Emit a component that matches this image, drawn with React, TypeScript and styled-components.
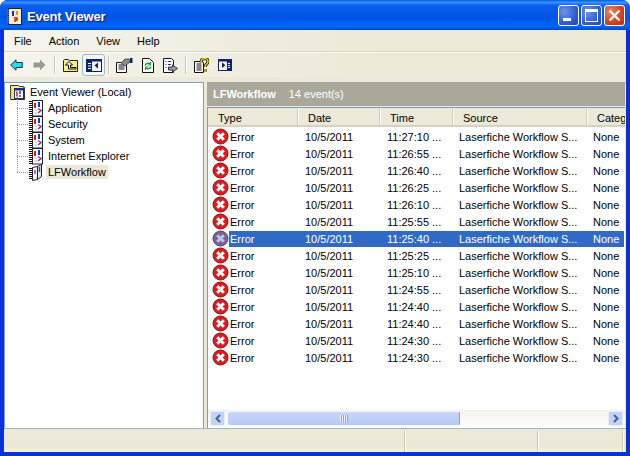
import React from "react";
import styled, { createGlobalStyle } from "styled-components";

const times = [
  "11:27:10 ...", "11:26:55 ...", "11:26:40 ...", "11:26:25 ...", "11:26:10 ...", "11:25:55 ...", "11:25:40 ...",
  "11:25:25 ...", "11:25:10 ...", "11:24:55 ...", "11:24:40 ...", "11:24:40 ...", "11:24:30 ...", "11:24:30 ...",
];
const logs = ["Application", "Security", "System", "Internet Explorer"];

function ErrorIcon({ selected }: { selected?: boolean }) {
  return (
    <IconSvg width="17" height="17" viewBox="0 0 17 17">
      <circle cx="8.5" cy="8.5" r="7.500" fill={selected ? "#7d5f92" : "#dc1c20"} stroke={selected ? "#4f4373" : "#8f1012"} />
      <path d="M5.200 5.200l6.600 6.600M11.800 5.200l-6.600 6.600" stroke={selected ? "#b9c8e8" : "#fff"} strokeWidth="3" />
    </IconSvg>
  );
}

function TitleIcon() {
  return (
    <IconSvg width="16" height="17" viewBox="0 0 16 17">
      <rect x="1.5" y="0.5" width="13" height="16" fill="#f3edc9" stroke="#222" />
      <path d="M1 2v13" stroke="#777" strokeWidth="2" strokeDasharray="1 1" />
      <path d="M6 3v5" stroke="#2030c0" strokeWidth="2" />
      <path d="M10 3v4" stroke="#d0a020" strokeWidth="2" />
      <path d="M7 10h3v2H8v2" fill="none" stroke="#c01818" strokeWidth="1.4" />
    </IconSvg>
  );
}

function FolderIcon() {
  return (
    <IconSvg width="17" height="17" viewBox="0 0 17 17">
      <path d="M1.500 1.500h8l1 1h4v1h1v12h-14z" fill="#f7ef7a" stroke="#333" />
      <path d="M2.500 4v11" stroke="#d8c93c" strokeWidth="2" strokeDasharray="1 1" />
      <rect x="5.500" y="4.500" width="9" height="10" fill="#fff" stroke="#16307e" />
      <rect x="6" y="5" width="8" height="1.500" fill="#16307e" />
      <path d="M8 7.500v5" stroke="#d01818" strokeWidth="1.600" />
      <path d="M11 7v3" stroke="#1840d8" strokeWidth="1.600" />
      <path d="M11 11v2" stroke="#9a30a8" strokeWidth="1.600" />
    </IconSvg>
  );
}

function LogIcon() {
  return (
    <IconSvg width="15" height="17" viewBox="0 0 15 17">
      <path d="M1.500 1v15" stroke="#111" strokeWidth="3" strokeDasharray="1 1" />
      <rect x="3.500" y="0.500" width="10" height="15.500" fill="#fff" stroke="#222" />
      <path d="M6 3v5" stroke="#e01818" strokeWidth="2" />
      <path d="M10 2v5" stroke="#1830e0" strokeWidth="2" />
      <path d="M9 8.500l3 2-3 2.500" fill="none" stroke="#9030a0" strokeWidth="1.500" />
      <path d="M5 10h3M5 13h3" stroke="#bbb" />
    </IconSvg>
  );
}

function OpenLogIcon() {
  return (
    <IconSvg width="15" height="17" viewBox="0 0 15 17">
      <path d="M1.500 4v12" stroke="#111" strokeWidth="3" strokeDasharray="1 1" />
      <path d="M3.500 3.500l5-1v13l-5 1z" fill="#f4f4f4" stroke="#222" />
      <path d="M8.500 2.500l4-2v12l-4 3z" fill="#e8e8e8" stroke="#222" />
      <path d="M6 6v4" stroke="#b040c0" strokeWidth="1.600" />
      <path d="M10.500 3v5" stroke="#2a40c8" strokeWidth="1.400" />
    </IconSvg>
  );
}

function BackIcon() {
  return (
    <IconSvg width="13" height="12" viewBox="0 0 13 12">
      <path d="M0.700 6L6 0.800V3.500h6.300v5H6v2.700z" fill="#25dce8" stroke="#0b3a44" />
    </IconSvg>
  );
}

function ForwardIcon() {
  return (
    <IconSvg width="13" height="12" viewBox="0 0 13 12">
      <path d="M12.500 6L7 0.500V3.500H0.500v5H7v3z" fill="#9a9a92" />
    </IconSvg>
  );
}

function UpIcon() {
  return (
    <IconSvg width="16" height="14" viewBox="0 0 16 14">
      <path d="M0.500 13.500v-11l1-1h4l1 1h8v11z" fill="#f7ef80" stroke="#222" />
      <path d="M6 3.500l3.500 3.500H7.500v2.500H13v1.500H5.500V7H2.500z" fill="#fdfce0" stroke="#111" />
    </IconSvg>
  );
}

function PaneLeftIcon() {
  return (
    <IconSvg width="16" height="13" viewBox="0 0 16 13">
      <rect x="0.500" y="0.500" width="15" height="12" fill="#f4f4f8" stroke="#0a246a" />
      <rect x="1" y="1" width="14" height="1.500" fill="#0a246a" />
      <rect x="1" y="1" width="5" height="11" fill="#0a246a" />
      <path d="M2 4.500h3M2 7h3M2 9.500h3" stroke="#fff" />
      <path d="M12 3.500v6l-3.500-3z" fill="#222" />
    </IconSvg>
  );
}

function PropsIcon() {
  return (
    <IconSvg width="17" height="15" viewBox="0 0 17 15">
      <path d="M0.500 4.500h10v10h-10z" fill="#fff" stroke="#111" />
      <path d="M2.500 7h6M2.500 9h6M2.500 11h6" stroke="#111" />
      <path d="M5 5l4-4h4l1 3-5 4z" fill="#8b8b8b" stroke="#555" />
      <rect x="14" y="0" width="2.500" height="5" fill="#0a246a" />
    </IconSvg>
  );
}

function RefreshIcon() {
  return (
    <IconSvg width="12" height="15" viewBox="0 0 12 15">
      <path d="M0.500 0.500h7l4 4v10h-11z" fill="#fff" stroke="#111" />
      <path d="M3 7.500a3 3 0 0 1 5-1.500M9 8.500a3 3 0 0 1-5 1.500" fill="none" stroke="#1a9a2a" strokeWidth="1.300" />
      <path d="M8.500 4v3h-3M3.500 12V9h3" fill="none" stroke="#1a9a2a" />
    </IconSvg>
  );
}

function ExportIcon() {
  return (
    <IconSvg width="15" height="15" viewBox="0 0 15 15">
      <path d="M0.500 0.500h8l2 2v12h-10z" fill="#fff" stroke="#111" />
      <path d="M2.500 3.500h1M5 3.500h3M2.500 6.500h1M5 6.500h3M2.500 9.500h1" stroke="#1030a0" />
      <path d="M5.500 9h4V7l5 3.500-5 3.500v-2h-4z" fill="#999" stroke="#333" />
    </IconSvg>
  );
}

function HelpIcon() {
  return (
    <IconSvg width="15" height="15" viewBox="0 0 15 15">
      <path d="M0.500 3.500h8l1 1v10h-9z" fill="#fff" stroke="#111" />
      <path d="M2.500 6h5M2.500 8h5M2.500 10h5M2.500 12h5" stroke="#111" />
      <path d="M7 4.500c0-5 7-5 7-1 0 3-3 2.500-3 5.500M11 11v3" fill="none" stroke="#111" strokeWidth="3" />
      <path d="M7 4.500c0-5 7-5 7-1 0 3-3 2.500-3 5.500M11 11v3" fill="none" stroke="#f5d800" strokeWidth="1.500" />
    </IconSvg>
  );
}

function PaneRightIcon() {
  return (
    <IconSvg width="14" height="12" viewBox="0 0 14 12">
      <rect x="0.500" y="0.500" width="13" height="11" fill="#f4f4f8" stroke="#0a246a" />
      <rect x="1" y="1" width="12" height="1.500" fill="#0a246a" />
      <rect x="9" y="1" width="4" height="10" fill="#0a246a" />
      <path d="M10 4.500h2M10 6.500h2M10 8.500h2" stroke="#fff" />
      <path d="M4 3.500v5.500l3.500-2.750z" fill="#222" />
    </IconSvg>
  );
}

export default function App() {
  return (
    <>
      <GlobalStyle />
      <Window>
        <TitleBar>
          <TitleIcon />
          <Title>Event Viewer</Title>
          <Caption>
            <CaptionButton>
              <MinGlyph />
            </CaptionButton>
            <CaptionButton>
              <MaxGlyph />
            </CaptionButton>
            <CaptionButton $close>
              <svg width="13" height="13" viewBox="0 0 13 13">
                <path d="M1.500 1.500l10 10M11.500 1.500l-10 10" stroke="#fff" strokeWidth="2.400" />
              </svg>
            </CaptionButton>
          </Caption>
        </TitleBar>
        <Body>
          <MenuBar>
            <MenuItem>File</MenuItem>
            <MenuItem>Action</MenuItem>
            <MenuItem>View</MenuItem>
            <MenuItem>Help</MenuItem>
          </MenuBar>
          <Toolbar>
            <ToolButton><BackIcon /></ToolButton>
            <ToolButton><ForwardIcon /></ToolButton>
            <ToolSep />
            <ToolButton><UpIcon /></ToolButton>
            <ToolButton $active><PaneLeftIcon /></ToolButton>
            <ToolSep />
            <ToolButton><PropsIcon /></ToolButton>
            <ToolButton><RefreshIcon /></ToolButton>
            <ToolButton><ExportIcon /></ToolButton>
            <ToolSep />
            <ToolButton><HelpIcon /></ToolButton>
            <ToolButton><PaneRightIcon /></ToolButton>
          </Toolbar>
          <Main>
            <TreePane>
              <RootNode>
                <FolderIcon />
                <span>Event Viewer (Local)</span>
              </RootNode>
              {logs.map((name) => (
                <TreeNode key={name}>
                  <LogIcon />
                  <NodeLabel>{name}</NodeLabel>
                </TreeNode>
              ))}
              <TreeNode>
                <OpenLogIcon />
                <NodeLabel $current>LFWorkflow</NodeLabel>
              </TreeNode>
            </TreePane>
            <RightPane>
              <PaneHeader>
                <strong>LFWorkflow</strong>
                <span>14 event(s)</span>
              </PaneHeader>
              <ListFrame>
                <ListHead>
                  <HeadCell $w={90}>Type</HeadCell>
                  <HeadCell $w={82}>Date</HeadCell>
                  <HeadCell $w={73}>Time</HeadCell>
                  <HeadCell $w={134}>Source</HeadCell>
                  <HeadCell $w={60}>Category</HeadCell>
                </ListHead>
                <Rows>
                  {times.map((time, i) => (
                    <Row key={i}>
                      <ErrorIcon selected={i === 6} />
                      <RowText $selected={i === 6}>
                        <TypeCell>Error</TypeCell>
                        <Cell $w={82}>10/5/2011</Cell>
                        <Cell $w={72}>{time}</Cell>
                        <Cell $w={134}>Laserfiche Workflow S...</Cell>
                        <Cell $w={30}>None</Cell>
                      </RowText>
                    </Row>
                  ))}
                </Rows>
                <ScrollBar>
                  <ScrollButton>
                    <svg width="8" height="9" viewBox="0 0 8 9">
                      <path d="M6 1L2.500 4.500 6 8" fill="none" stroke="#4d6185" strokeWidth="2" />
                    </svg>
                  </ScrollButton>
                  <ScrollThumb>
                    <Grip />
                  </ScrollThumb>
                  <ScrollTrack />
                  <ScrollButton>
                    <svg width="8" height="9" viewBox="0 0 8 9">
                      <path d="M2 1l3.500 3.500L2 8" fill="none" stroke="#4d6185" strokeWidth="2" />
                    </svg>
                  </ScrollButton>
                </ScrollBar>
              </ListFrame>
            </RightPane>
          </Main>
          <StatusBar>
            <StatusCell $w={401} />
            <StatusCell $w={133} />
            <StatusCell $w={85} />
          </StatusBar>
        </Body>
      </Window>
    </>
  );
}

const GlobalStyle = createGlobalStyle`
  html, body {
    margin: 0;
    padding: 0;
    background: #fff;
  }
  * {
    box-sizing: border-box;
  }
`;

const IconSvg = styled.svg`
  flex: none;
  display: block;
`;

const Window = styled.div`
  width: 630px;
  height: 456px;
  display: flex;
  flex-direction: column;
  overflow: hidden;
  border-radius: 8px 8px 0 0;
  background: #0831d9;
  font-family: "Liberation Sans", Tahoma, sans-serif;
  font-size: 11px;
  color: #000;
`;

const TitleBar = styled.div`
  height: 30px;
  flex: none;
  display: flex;
  align-items: center;
  gap: 4px;
  padding: 2px 5px 0 7px;
  background: linear-gradient(180deg, #0058ee 0%, #3a93ff 8%, #0a5fee 18%, #0055e5 60%, #0066ff 88%, #0047c8 100%);
`;

const Title = styled.div`
  flex: 1;
  color: #fff;
  font-size: 13px;
  font-weight: 700;
  letter-spacing: -0.2px;
  text-shadow: 1px 1px 1px #0f1089;
`;

const Caption = styled.div`
  display: flex;
  gap: 2px;
  margin-top: -2px;
`;

const CaptionButton = styled.div<{ $close?: boolean }>`
  width: 21px;
  height: 21px;
  display: flex;
  align-items: center;
  justify-content: center;
  position: relative;
  border: 1px solid #fff;
  border-radius: 3px;
  background: ${(p) =>
    p.$close
      ? "radial-gradient(circle at 30% 30%, #e8876b, #d8431c 55%, #b52e0c)"
      : "radial-gradient(circle at 30% 30%, #6f92ea, #2f5fd8 60%, #1c44b8)"};
`;

const MinGlyph = styled.span`
  width: 8px;
  height: 3px;
  background: #fff;
  position: absolute;
  left: 4px;
  bottom: 4px;
`;

const MaxGlyph = styled.span`
  width: 13px;
  height: 13px;
  border: 1px solid #fff;
  border-top-width: 3px;
`;

const Body = styled.div`
  flex: 1;
  min-height: 0;
  display: flex;
  flex-direction: column;
  margin: 0 4px 4px;
  background: #ece9d8;
`;

const MenuBar = styled.div`
  height: 22px;
  flex: none;
  display: flex;
  align-items: center;
  gap: 17px;
  padding: 0 0 0 10px;
  border-bottom: 1px solid #d8d2bd;
  background: linear-gradient(90deg, #f6f4ec 0%, #ece9d8 60%);
`;

const MenuItem = styled.div`
  flex: none;
`;

const Toolbar = styled.div`
  height: 25px;
  flex: none;
  display: flex;
  align-items: center;
  padding-left: 1px;
  border-top: 1px solid #fff;
  background: linear-gradient(90deg, #f6f4ec 0%, #ece9d8 60%);
`;

const ToolButton = styled.div<{ $active?: boolean }>`
  width: 23px;
  height: 22px;
  display: flex;
  align-items: center;
  justify-content: center;
  border-radius: 3px;
  ${(p) => p.$active && "border: 1px solid #9fb6cf; background: #f7f6f0;"}
`;

const ToolSep = styled.div`
  width: 1px;
  height: 18px;
  margin: 0 4px 0 3px;
  background: #c9c6b4;
  box-shadow: 1px 0 0 #fff;
`;

const Main = styled.div`
  flex: 1;
  min-height: 0;
  display: flex;
  gap: 3px;
  margin-top: 5px;
  padding-right: 1px;
  border-bottom: 1px solid #9db5c6;
`;

const TreePane = styled.div`
  width: 200px;
  flex: none;
  padding: 1px 0 0 4px;
  background: #fff;
  border: 1px solid #7f9db9;
  border-bottom: 0;
`;

const RootNode = styled.div`
  height: 16px;
  display: flex;
  align-items: center;
  gap: 4px;
`;

const TreeNode = styled.div`
  height: 16px;
  display: flex;
  align-items: center;
  margin-left: 8px;
  padding-left: 12px;
  position: relative;

  &::before {
    content: "";
    position: absolute;
    left: 0;
    top: -8px;
    height: 16px;
    border-left: 1px dotted #999;
  }

  &::after {
    content: "";
    position: absolute;
    left: 0;
    top: 8px;
    width: 11px;
    border-top: 1px dotted #999;
  }
`;

const NodeLabel = styled.span<{ $current?: boolean }>`
  margin-left: 2px;
  padding: 1px 2px;
  background: ${(p) => (p.$current ? "#ece9d8" : "transparent")};
`;

const RightPane = styled.div`
  flex: 1;
  min-width: 0;
  display: flex;
  flex-direction: column;
`;

const PaneHeader = styled.div`
  height: 24px;
  flex: none;
  display: flex;
  align-items: center;
  gap: 13px;
  padding-left: 6px;
  background: #aca899;
  color: #fff;
`;

const ListFrame = styled.div`
  flex: 1;
  min-height: 0;
  display: flex;
  flex-direction: column;
  margin-top: 1px;
  background: #fff;
  border: 1px solid #7f9db9;
  border-bottom: 0;
  border-right: 0;
  overflow: hidden;
`;

const ListHead = styled.div`
  height: 19px;
  flex: none;
  display: flex;
  background: #ece9d8;
  border-bottom: 2px solid #d6d2c2;
`;

const HeadCell = styled.div<{ $w: number }>`
  width: ${(p) => p.$w}px;
  flex: none;
  padding: 4px 0 0 10px;
  border-right: 1px solid #cfcbb8;
  box-shadow: 1px 0 0 #fff;
  white-space: nowrap;
`;

const Rows = styled.div`
  flex: 1;
  min-height: 0;
  padding: 1px 1px 0 0;
`;

const Row = styled.div`
  height: 17px;
  display: flex;
  align-items: center;
  padding-left: 4px;
`;

const RowText = styled.div<{ $selected?: boolean }>`
  flex: 1;
  height: 16px;
  display: flex;
  align-items: center;
  padding-left: 1px;
  background: ${(p) => (p.$selected ? "#316ac5" : "transparent")};
  color: ${(p) => (p.$selected ? "#fff" : "#000")};
`;

const TypeCell = styled.div`
  width: 75px;
  flex: none;
`;

const Cell = styled.div<{ $w: number }>`
  width: ${(p) => p.$w}px;
  flex: none;
  white-space: nowrap;
`;

const ScrollBar = styled.div`
  height: 17px;
  flex: none;
  display: flex;
  align-items: center;
  padding: 0 2px;
  margin-bottom: 1px;
  background: linear-gradient(180deg, #f3f1ec, #fefefb);
`;

const ScrollButton = styled.div`
  width: 15px;
  height: 15px;
  flex: none;
  display: flex;
  align-items: center;
  justify-content: center;
  border: 1px solid #e8eefb;
  border-radius: 2px;
  background: #c1d2fa;
`;

const ScrollThumb = styled.div`
  width: 233px;
  height: 15px;
  flex: none;
  margin-left: 2px;
  display: flex;
  align-items: center;
  justify-content: center;
  border: 1px solid #f4f7fe;
  border-right-color: #8aa0d0;
  border-radius: 3px;
  background: linear-gradient(180deg, #c8d6fb, #b5c8f8);
`;

const Grip = styled.span`
  width: 8px;
  height: 7px;
  background: repeating-linear-gradient(90deg, #eef3fe 0 1px, #8ca4dc 1px 2px);
`;

const ScrollTrack = styled.div`
  flex: 1;
`;

const StatusBar = styled.div`
  height: 23px;
  flex: none;
  display: flex;
  padding-top: 2px;
  background: linear-gradient(180deg, #ece9d8, #ebe8d6 80%, #f5f3e9);
`;

const StatusCell = styled.div<{ $w: number }>`
  width: ${(p) => p.$w}px;
  flex: none;
  border-right: 1px solid #c9c6b4;
  box-shadow: 1px 0 0 #fff;
`;
